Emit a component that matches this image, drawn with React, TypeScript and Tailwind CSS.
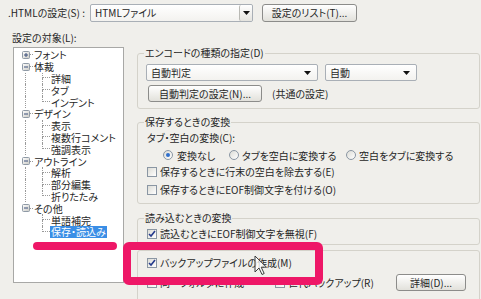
import type { ReactNode } from "react";

const BG = "bg-[#f0efeb]";

type TreeItem = {
  text: string;
  level: 0 | 1;
  expander?: "+" | "-";
  last?: boolean;
  parentLast?: boolean;
  selected?: boolean;
};

const TREE: TreeItem[] = [
  { text: "フォント", level: 0, expander: "+" },
  { text: "体裁", level: 0, expander: "-" },
  { text: "詳細", level: 1 },
  { text: "タブ", level: 1 },
  { text: "インデント", level: 1, last: true },
  { text: "デザイン", level: 0, expander: "-" },
  { text: "表示", level: 1 },
  { text: "複数行コメント", level: 1 },
  { text: "強調表示", level: 1, last: true },
  { text: "アウトライン", level: 0, expander: "-" },
  { text: "解析", level: 1 },
  { text: "部分編集", level: 1 },
  { text: "折りたたみ", level: 1, last: true },
  { text: "その他", level: 0, expander: "-" },
  { text: "単語補完", level: 1, parentLast: true },
  { text: "保存・読込み", level: 1, last: true, parentLast: true, selected: true },
];

function Expander({ sign }: { sign: "+" | "-" }) {
  return (
    <svg width="8" height="8" viewBox="0 0 8 8" className="shrink-0">
      <defs>
        <linearGradient id="exp" x1="0" y1="0" x2="1" y2="1">
          <stop offset="0" stopColor="#ffffff" />
          <stop offset="1" stopColor="#c9c9c4" />
        </linearGradient>
      </defs>
      <rect x="0.5" y="0.5" width="7" height="7" rx="1" fill="url(#exp)" stroke="#8f9aa6" />
      <path d="M2 4h4" stroke="#3b4f7a" strokeWidth="1" />
      {sign === "+" && <path d="M4 2v4" stroke="#3b4f7a" strokeWidth="1" />}
    </svg>
  );
}

function TreeRow({ item }: { item: TreeItem }) {
  if (item.level === 0) {
    return (
      <div className="flex h-[11.8px] items-center pl-[8px]">
        <Expander sign={item.expander ?? "+"} />
        <span className="w-[3px] border-t border-dotted border-[#9a9a9a]" />
        <span className="ml-[1px] whitespace-nowrap leading-[11px]">{item.text}</span>
      </div>
    );
  }
  return (
    <div className="flex h-[11.8px] items-stretch">
      <span className="w-[11px] shrink-0" />
      <span
        className={
          "w-[17px] shrink-0 " +
          (item.parentLast ? "" : "border-l border-dotted border-[#9a9a9a]")
        }
      />
      <span className="flex w-[8px] shrink-0 flex-col">
        <span className="h-1/2 border-b border-l border-dotted border-[#9a9a9a]" />
        <span className={"h-1/2 " + (item.last ? "" : "border-l border-dotted border-[#9a9a9a]")} />
      </span>
      <span
        className={
          "flex items-center whitespace-nowrap px-[1px] leading-[11px] " +
          (item.selected ? "bg-[#3a8ee6] text-white" : "")
        }
      >
        {item.text}
      </span>
    </div>
  );
}

function Arrow() {
  return (
    <svg width="7" height="4" viewBox="0 0 7 4" className="shrink-0">
      <path d="M0 0h7L3.5 4z" fill="#111" />
    </svg>
  );
}

function Combo({ text, className, boxed }: { text: string; className: string; boxed?: boolean }) {
  return (
    <div
      className={
        "flex items-center justify-between rounded-[2px] border border-[#a9afb6] bg-gradient-to-b from-white to-[#f3f2ef] pl-[4px] " +
        className
      }
    >
      <span className="whitespace-nowrap leading-[12px]">{text}</span>
      {boxed ? (
        <span className="flex h-full w-[13px] items-center justify-center rounded-[2px] border-l border-[#b9b9b4] bg-gradient-to-b from-white to-[#e4e3de]">
          <Arrow />
        </span>
      ) : (
        <span className="mr-[6px] flex items-center">
          <Arrow />
        </span>
      )}
    </div>
  );
}

function Button({ children, className }: { children: ReactNode; className: string }) {
  return (
    <div
      className={
        "flex items-center justify-center whitespace-nowrap rounded-[3px] border border-[#8c8c8a] bg-gradient-to-b from-white to-[#e2e1db] leading-[12px] " +
        className
      }
    >
      {children}
    </div>
  );
}

function Check({ checked }: { checked?: boolean }) {
  return (
    <span className="flex size-[10px] shrink-0 items-center justify-center border border-[#8a96a3] bg-gradient-to-br from-[#dcdcd6] to-white">
      {checked && (
        <svg width="8" height="8" viewBox="0 0 8 8">
          <path d="M1 4l2 2 4-5" fill="none" stroke="#243a8c" strokeWidth="1.6" />
        </svg>
      )}
    </span>
  );
}

function Radio({ checked }: { checked?: boolean }) {
  return (
    <span className="flex size-[10px] shrink-0 items-center justify-center rounded-full border border-[#8a96a3] bg-gradient-to-br from-[#dcdcd6] to-white">
      {checked && <span className="size-[4px] rounded-full bg-[#2f6fcc]" />}
    </span>
  );
}

function CheckRow({ checked, children, className = "" }: { checked?: boolean; children: ReactNode; className?: string }) {
  return (
    <div className={"flex h-[12px] items-center " + className}>
      <Check checked={checked} />
      <span className="ml-[3px] whitespace-nowrap leading-[12px]">{children}</span>
    </div>
  );
}

function Group({ label, className, children }: { label?: string; className: string; children: ReactNode }) {
  return (
    <div className={"relative w-[343px] rounded-[3px] border border-[#d4d2ca] " + className}>
      {label && (
        <span className={"absolute -top-[7px] left-[6px] whitespace-nowrap px-[1px] leading-[12px] " + BG}>
          {label}
        </span>
      )}
      {children}
    </div>
  );
}

export default function App() {
  return (
    <div
      className={
        "relative h-[299px] w-[481px] overflow-hidden text-[10px] text-[#262626] [font-feature-settings:'palt'] font-['Noto_Sans_CJK_JP','Noto_Sans',sans-serif] " +
        BG
      }
    >
      {/* top row */}
      <div className="flex h-[26px] items-start pl-[8px] pt-[4px]">
        <span className="w-[82px] whitespace-nowrap leading-[18px]">.HTMLの設定(S) :</span>
        <Combo text="HTMLファイル" className="h-[18px] w-[163px]" boxed />
        <Button className="ml-[9px] h-[18px] w-[95px]">設定のリスト(T)...</Button>
      </div>

      <div className="flex">
        {/* tree */}
        <div className="w-[137px] shrink-0 pl-[13px] pt-[6px]">
          <div className="-ml-[1px] h-[12px] whitespace-nowrap leading-[12px]">設定の対象(L):</div>
          <div className="mt-[3px] h-[236px] w-[111px] overflow-hidden border border-[#a8a8a6] bg-white pt-[1px]">
            {TREE.map((item) => (
              <TreeRow key={item.text} item={item} />
            ))}
          </div>
        </div>

        {/* settings */}
        <div className="flex flex-col">
          <Group label="エンコードの種類の指定(D)" className="mt-[27px] h-[56px] pl-[8px] pt-[10px]">
            <div className="flex">
              <Combo text="自動判定" className="h-[17px] w-[172px]" />
              <Combo text="自動" className="ml-[7px] h-[17px] w-[92px]" />
            </div>
            <div className="mt-[4px] flex items-center">
              <Button className="ml-[2px] h-[17px] w-[114px]">自動判定の設定(N)...</Button>
              <span className="ml-[10px] whitespace-nowrap leading-[12px]">(共通の設定)</span>
            </div>
          </Group>

          <Group label="保存するときの変換" className="mt-[13px] h-[82px] pl-[9px] pt-[9px]">
            <div className="h-[12px] whitespace-nowrap leading-[12px]">タブ・空白の変換(C):</div>
            <div className="mt-[5px] flex h-[12px] items-center pl-[16px]">
              <span className="flex w-[66px] items-center">
                <Radio checked />
                <span className="ml-[4px] whitespace-nowrap">変換なし</span>
              </span>
              <span className="flex w-[117px] items-center">
                <Radio />
                <span className="ml-[3px] whitespace-nowrap">タブを空白に変換する</span>
              </span>
              <span className="flex items-center">
                <Radio />
                <span className="ml-[3px] whitespace-nowrap">空白をタブに変換する</span>
              </span>
            </div>
            <CheckRow className="mt-[5px]">保存するときに行末の空白を除去する(E)</CheckRow>
            <CheckRow className="mt-[6px]">保存するときにEOF制御文字を付ける(O)</CheckRow>
          </Group>

          <Group label="読み込むときの変換" className="mt-[14px] h-[27px] pl-[9px] pt-[9px]">
            <CheckRow checked>読込むときにEOF制御文字を無視(F)</CheckRow>
          </Group>

          <Group className="mt-[5px] h-[60px] pl-[9px] pt-[6px]">
            <CheckRow checked>バックアップファイルの作成(M)</CheckRow>
            <div className="mt-[5px] flex h-[17px] items-center">
              <span className="flex w-[128px] items-center">
                <Check />
                <span className="ml-[3px] whitespace-nowrap">同一フォルダに作成</span>
              </span>
              <span className="flex w-[121px] items-center">
                <Check />
                <span className="ml-[3px] whitespace-nowrap">世代バックアップ(R)</span>
              </span>
              <Button className="h-[17px] w-[70px]">詳細(D)...</Button>
            </div>
          </Group>
        </div>
      </div>

      {/* annotations */}
      <div className="absolute left-[33px] top-[242px] h-[8px] w-[84px] rounded-full bg-[#ee1767]" />
      <div className="absolute left-[123px] top-[242px] h-[43px] w-[200px] rounded-[6px] border-[8px] border-[#ee1767]" />
      <svg
        className="absolute left-[254px] top-[255px]"
        width="13"
        height="21"
        viewBox="0 0 13 21"
      >
        <path
          d="M1 1v16l4-4 3 6.5 2.2-1-3-6.3h5.3z"
          fill="#ffffff"
          fillOpacity="0.75"
          stroke="#3a3a3a"
          strokeWidth="1"
          strokeLinejoin="round"
        />
      </svg>
    </div>
  );
}
